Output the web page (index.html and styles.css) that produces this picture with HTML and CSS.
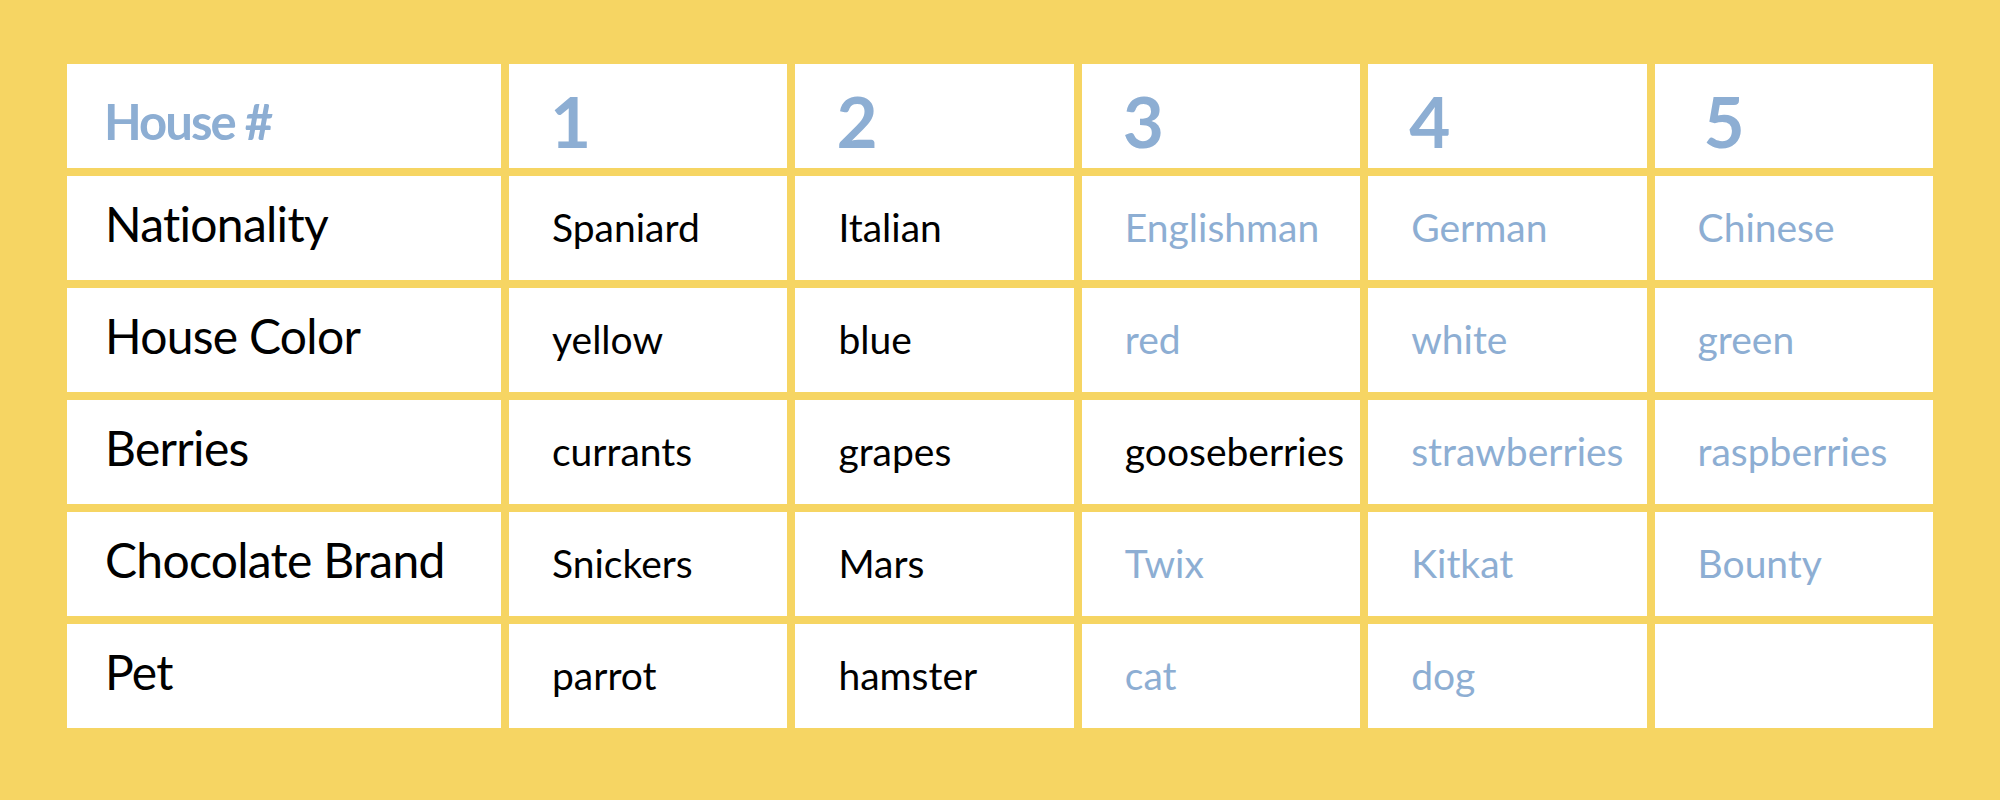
FILE: index.html
```html
<!DOCTYPE html>
<html lang="en">
<head>
<meta charset="utf-8">
<title>Houses</title>
<link rel="stylesheet" href="styles.css">
</head>
<body>
<main class="page">
  <div class="grid">
    <div class="cell head-label">House #</div>
    <div class="cell head-num">1</div>
    <div class="cell head-num">2</div>
    <div class="cell head-num">3</div>
    <div class="cell head-num">4</div>
    <div class="cell head-num head-num--wide">5</div>

    <div class="cell label">Nationality</div>
    <div class="cell data">Spaniard</div>
    <div class="cell data">Italian</div>
    <div class="cell data muted">Englishman</div>
    <div class="cell data muted">German</div>
    <div class="cell data muted">Chinese</div>

    <div class="cell label">House Color</div>
    <div class="cell data">yellow</div>
    <div class="cell data">blue</div>
    <div class="cell data muted">red</div>
    <div class="cell data muted">white</div>
    <div class="cell data muted">green</div>

    <div class="cell label">Berries</div>
    <div class="cell data">currants</div>
    <div class="cell data">grapes</div>
    <div class="cell data">gooseberries</div>
    <div class="cell data muted">strawberries</div>
    <div class="cell data muted">raspberries</div>

    <div class="cell label">Chocolate Brand</div>
    <div class="cell data">Snickers</div>
    <div class="cell data">Mars</div>
    <div class="cell data muted">Twix</div>
    <div class="cell data muted">Kitkat</div>
    <div class="cell data muted">Bounty</div>

    <div class="cell label">Pet</div>
    <div class="cell data">parrot</div>
    <div class="cell data">hamster</div>
    <div class="cell data muted">cat</div>
    <div class="cell data muted">dog</div>
    <div class="cell data muted"></div>
  </div>
</main>
</body>
</html>
```
FILE: styles.css
```css
html, body {
  margin: 0;
  padding: 0;
}
body {
  background: #f6d563;
  font-family: Lato, "Noto Sans", sans-serif;
  color: #000;
}
.page {
  height: 800px;
  padding-top: 64px;
  box-sizing: border-box;
}
.grid {
  width: 1866px;
  margin: 0 auto;
  display: grid;
  grid-template-columns: 434px repeat(5, 1fr);
  grid-auto-rows: 104px;
  gap: 8px;
}
.cell {
  background: #fff;
  box-sizing: border-box;
  line-height: 1.2;
  white-space: nowrap;
}
.head-label {
  font-size: 49px;
  font-weight: 700;
  letter-spacing: -0.04em;
  color: #8daed3;
  padding: 28px 0 0 37px;
}
.head-num {
  font-size: 71px;
  font-weight: 700;
  color: #8daed3;
  padding: 14px 0 0 41px;
}
.head-num--wide {
  padding-left: 49px;
}
.label {
  font-size: 48px;
  letter-spacing: -0.015em;
  padding: 19px 0 0 38px;
}
.data {
  font-size: 39px;
  padding: 28px 0 0 43px;
}
.muted {
  color: #8daed3;
}
```
